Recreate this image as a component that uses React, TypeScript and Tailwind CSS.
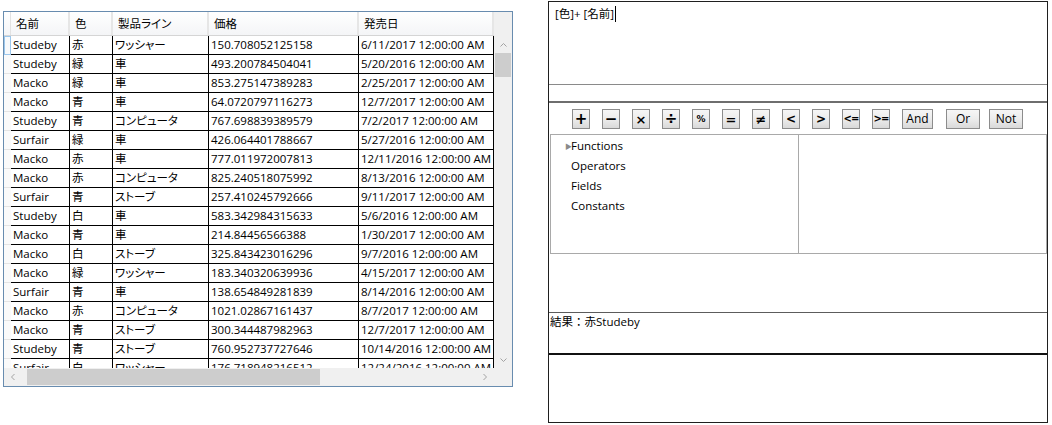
import React from "react"

const rows: string[][] = [
  ["Studeby", "赤", "ワッシャー", "150.708052125158", "6/11/2017 12:00:00 AM"],
  ["Studeby", "緑", "車", "493.200784504041", "5/20/2016 12:00:00 AM"],
  ["Macko", "緑", "車", "853.275147389283", "2/25/2017 12:00:00 AM"],
  ["Macko", "青", "車", "64.0720797116273", "12/7/2017 12:00:00 AM"],
  ["Studeby", "青", "コンピュータ", "767.698839389579", "7/2/2017 12:00:00 AM"],
  ["Surfair", "緑", "車", "426.064401788667", "5/27/2016 12:00:00 AM"],
  ["Macko", "赤", "車", "777.011972007813", "12/11/2016 12:00:00 AM"],
  ["Macko", "赤", "コンピュータ", "825.240518075992", "8/13/2016 12:00:00 AM"],
  ["Surfair", "青", "ストーブ", "257.410245792666", "9/11/2017 12:00:00 AM"],
  ["Studeby", "白", "車", "583.342984315633", "5/6/2016 12:00:00 AM"],
  ["Macko", "青", "車", "214.84456566388", "1/30/2017 12:00:00 AM"],
  ["Macko", "白", "ストーブ", "325.843423016296", "9/7/2016 12:00:00 AM"],
  ["Macko", "緑", "ワッシャー", "183.340320639936", "4/15/2017 12:00:00 AM"],
  ["Surfair", "青", "車", "138.654849281839", "8/14/2016 12:00:00 AM"],
  ["Macko", "赤", "コンピュータ", "1021.02867161437", "8/7/2017 12:00:00 AM"],
  ["Macko", "青", "ストーブ", "300.344487982963", "12/7/2017 12:00:00 AM"],
  ["Studeby", "青", "ストーブ", "760.952737727646", "10/14/2016 12:00:00 AM"],
  ["Surfair", "白", "ワッシャー", "176.718948216512", "12/24/2016 12:00:00 AM"],
]

const columns = [
  { title: "名前", w: "w-[59px]" },
  { title: "色", w: "w-[43px]" },
  { title: "製品ライン", w: "w-[96px]" },
  { title: "価格", w: "w-[150px]" },
  { title: "発売日", w: "w-[135px]" },
]

function Chevron({ dir }: { dir: "up" | "down" | "left" | "right" }) {
  const d = {
    up: "M1.5 5.5 L4.5 2.5 L7.5 5.5",
    down: "M1.5 2.5 L4.5 5.5 L7.5 2.5",
    left: "M5.5 1 L2.5 4 L5.5 7",
    right: "M2.5 1 L5.5 4 L2.5 7",
  }[dir]
  return (
    <svg width="9" height="8" viewBox="0 0 9 8" fill="none">
      <path d={d} stroke="#a3a3a3" strokeWidth="1" />
    </svg>
  )
}

function DataGrid() {
  return (
    <div className="ml-[3px] mt-[11px] w-[510px] h-[376px] border border-[#688caf] flex flex-col bg-white">
      <div className="flex h-[356px]">
        <div className="w-[490px] overflow-hidden">
          {/* header */}
          <div className="flex h-[24px] border-b border-[#d5d5d5] bg-gradient-to-b from-white to-[#f4f5f7]">
            <div className="w-[7px] border-r border-[#e2e2e2]" />
            {columns.map((c) => (
              <div
                key={c.title}
                className={`${c.w} shrink-0 border-r-2 border-[#e6e6e6] pl-[5px] leading-[23px] whitespace-nowrap`}
              >
                {c.title}
              </div>
            ))}
          </div>
          {rows.map((r, i) => (
            <div key={i} className="flex h-[19px]">
              <div
                className={
                  i === 0
                    ? "w-[7px] shrink-0 border border-[#9cc7ec] bg-[#f7f9fb]"
                    : "w-[7px] shrink-0 border-b border-[#e4e4e4] bg-[#fafafa]"
                }
              />
              {r.map((v, j) => (
                <div
                  key={j}
                  className={`${columns[j].w} shrink-0 border-r border-b border-black pl-[2px] leading-[18px] whitespace-nowrap overflow-hidden`}
                >
                  {v}
                </div>
              ))}
            </div>
          ))}
        </div>
        {/* vertical scrollbar */}
        <div className="w-[18px] bg-[#f0f0f0] flex flex-col">
          <div className="h-[24px]" />
          <div className="h-[17px] flex items-center justify-center">
            <Chevron dir="up" />
          </div>
          <div className="h-[24px] mx-[1px] bg-[#cdcdcd]" />
          <div className="flex-1" />
          <div className="h-[17px] flex items-center justify-center">
            <Chevron dir="down" />
          </div>
        </div>
      </div>
      {/* horizontal scrollbar */}
      <div className="h-[18px] flex bg-[#f0f0f0]">
        <div className="w-[18px] flex items-center justify-center">
          <Chevron dir="left" />
        </div>
        <div className="ml-[5px] w-[293px] my-[1px] bg-[#cdcdcd]" />
        <div className="flex-1" />
        <div className="w-[18px] flex items-center justify-center">
          <Chevron dir="right" />
        </div>
        <div className="w-[18px]" />
      </div>
    </div>
  )
}

// symbol, font size class
const ops: [string, string][] = [
  ["+", "text-[15px]"],
  ["−", "text-[15px]"],
  ["×", "text-[13px]"],
  ["÷", "text-[15px]"],
  ["%", "text-[9px]"],
  ["=", "text-[13px]"],
  ["≠", "text-[13px]"],
  ["<", "text-[12px]"],
  [">", "text-[12px]"],
  ["<=", "text-[10px] tracking-[-1px]"],
  [">=", "text-[10px] tracking-[-1px]"],
]

function OpButton({ label, className }: { label: string; className: string }) {
  return (
    <div
      className={`h-[20px] shrink-0 border border-[#8c8c8c] bg-gradient-to-b from-[#f6f6f6] via-[#ececec] to-[#d9d9d9] flex items-center justify-center leading-none ${className}`}
    >
      {label}
    </div>
  )
}

function ExpressionEditor() {
  return (
    <div className="ml-[35px] mt-[1px] w-[500px] h-[422px] border border-[#1f1f1f] flex flex-col">
      <div className="h-[83px] border-b border-[#8a8a8a] pl-[6px] pt-[3px] leading-[18px] flex items-start">
        <span>[色]+ [名前]</span>
        <span className="ml-[1px] mt-[1px] w-[1px] h-[16px] bg-black" />
      </div>
      <div className="h-[16px]" />
      <div className="h-[2px] bg-[#6e6e6e]" />
      <div className="h-[31px] pt-[6px] pl-[23px] flex items-start">
        {ops.map(([o, size], i) => (
          <OpButton
            key={o}
            label={o}
            className={`w-[18px] font-bold font-['DejaVu_Sans',sans-serif] ${size} ${i > 0 ? "ml-[12px]" : ""}`}
          />
        ))}
        <OpButton label="And" className="w-[31px] ml-[12px] text-[12px]" />
        <OpButton label="Or" className="w-[34px] ml-[13px] text-[12px]" />
        <OpButton label="Not" className="w-[34px] ml-[9px] text-[12px]" />
      </div>
      <div className="h-[120px] flex pl-[1px]">
        <div className="w-[249px] border border-[#a9a9a9] pt-[1px] pl-[14px]">
          {["Functions", "Operators", "Fields", "Constants"].map((t, i) => (
            <div key={t} className="h-[20px] leading-[20px] flex items-center">
              <span className="w-[6px] text-[7px] text-[#8a8a8a] leading-none">{i === 0 ? "▶" : ""}</span>
              <span>{t}</span>
            </div>
          ))}
        </div>
        <div className="w-[249px] border border-l-0 border-[#a9a9a9]" />
      </div>
      <div className="h-[58px]" />
      <div className="h-[1px] bg-[#5c5c5c]" />
      <div className="h-[40px] pl-[1px] leading-[18px] [font-feature-settings:normal]">結果：赤Studeby</div>
      <div className="h-[2px] bg-[#111]" />
      <div className="flex-1" />
    </div>
  )
}

export default function App() {
  return (
    <div className="w-[1052px] h-[425px] bg-white flex items-start text-black text-[11.5px] font-['Open_Sans','Noto_Sans_CJK_JP',sans-serif] [font-feature-settings:'palt']">
      <DataGrid />
      <ExpressionEditor />
    </div>
  )
}
